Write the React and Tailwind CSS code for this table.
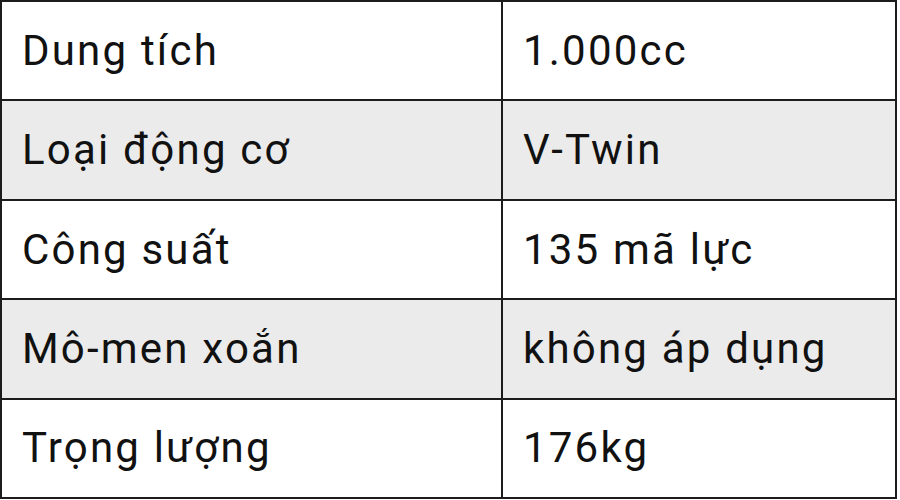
const specs = [
  ['Dung tích', '1.000cc'],
  ['Loại động cơ', 'V-Twin'],
  ['Công suất', '135 mã lực'],
  ['Mô-men xoắn', 'không áp dụng'],
  ['Trọng lượng', '176kg'],
];

export default function App() {
  return (
    <div className="w-[900px] h-[500px] bg-white font-['Roboto',sans-serif] text-[#111]">
      <div className="w-[897px] h-[499px] border-2 border-[#1c1c1c] flex flex-col">
        {specs.map(([label, value], i) => (
          <div
            key={label}
            className={`flex flex-1 ${i > 0 ? 'border-t-2 border-[#1c1c1c]' : ''} ${i % 2 === 1 ? 'bg-[#ebebeb]' : 'bg-white'}`}
          >
            <div className="w-[501px] border-r-2 border-[#1c1c1c] flex items-center pl-5 text-[42px] tracking-[2.2px] leading-none">
              {label}
            </div>
            <div className="flex-1 flex items-center pl-5 text-[42px] tracking-[2.2px] leading-none">
              {value}
            </div>
          </div>
        ))}
      </div>
    </div>
  );
}
